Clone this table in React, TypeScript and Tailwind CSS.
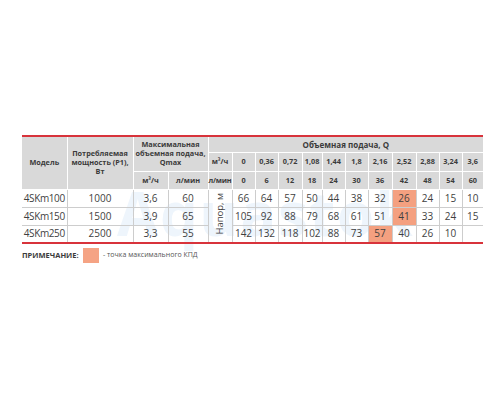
const widths = [45, 66, 35, 40, 24, 23, 23, 24, 20, 23, 23, 24, 24, 23, 23, 21];

const flowM3 = ['0', '0,36', '0,72', '1,08', '1,44', '1,8', '2,16', '2,52', '2,88', '3,24', '3,6'];
const flowL = ['0', '6', '12', '18', '24', '30', '36', '42', '48', '54', '60'];

type Row = {
  model: string;
  power: string;
  qm3: string;
  ql: string;
  head: string[];
  hot: number;
};

const rows: Row[] = [
  { model: '4SKm100', power: '1000', qm3: '3,6', ql: '60', head: ['66', '64', '57', '50', '44', '38', '32', '26', '24', '15', '10'], hot: 7 },
  { model: '4SKm150', power: '1500', qm3: '3,9', ql: '65', head: ['105', '92', '88', '79', '68', '61', '51', '41', '33', '24', '15'], hot: 7 },
  { model: '4SKm250', power: '2500', qm3: '3,3', ql: '55', head: ['142', '132', '118', '102', '88', '73', '57', '40', '26', '10', ''], hot: 6 },
];

const th = 'bg-[#d9d9d9] border border-white text-[7.3px] font-bold text-[#3b3b3b] leading-[9px] text-center p-0 whitespace-nowrap';
const td = 'border border-[#cdcdcd] text-[10px] text-[#3f3f3f] text-center p-0 h-[18px]';

export default function App() {
  return (
    <div className="w-[500px] h-[400px] bg-white pt-[135px] pl-[22px] font-['Open_Sans',sans-serif]">
      <div className="relative w-[461px]">
        <span className="absolute left-[95px] top-[48px] text-[60px] font-bold text-[#eef5fc] leading-none tracking-wide select-none">
          Aquastok
        </span>
        <table className="relative w-[461px] table-fixed border-collapse border-t-2 border-b-2 border-t-[#d8333b] border-b-[#d8333b] border-x-0">
          <colgroup>
            {widths.map((w, i) => (
              <col key={i} style={{ width: w }} />
            ))}
          </colgroup>
          <thead>
            <tr className="h-[16px]">
              <th rowSpan={3} className={th + ' border-l-0'}>Модель</th>
              <th rowSpan={3} className={th}>
                Потребляемая
                <br />
                мощность (P1),
                <br />
                Вт
              </th>
              <th rowSpan={2} colSpan={2} className={th}>
                Максимальная
                <br />
                объемная подача,
                <br />
                Qmax
              </th>
              <th colSpan={12} className={th + ' border-r-0 text-[8px]'}>Объемная подача, Q</th>
            </tr>
            <tr className="h-[19px]">
              <th className={th + ' text-[6.8px]'}>м³/ч</th>
              {flowM3.map((v, i) => (
                <th key={v} className={th + (i === 10 ? ' border-r-0' : '')}>
                  {v}
                </th>
              ))}
            </tr>
            <tr className="h-[18px]">
              <th className={th}>м³/ч</th>
              <th className={th}>л/мин</th>
              <th className={th + ' text-[6.6px] tracking-[-0.2px]'}>л/мин</th>
              {flowL.map((v, i) => (
                <th key={v} className={th + (i === 10 ? ' border-r-0' : '')}>
                  {v}
                </th>
              ))}
            </tr>
          </thead>
          <tbody>
            {rows.map((r, ri) => (
              <tr key={r.model}>
                <td className={td + ' border-l-0 tracking-[-0.4px]'}>{r.model}</td>
                <td className={td}>{r.power}</td>
                <td className={td}>{r.qm3}</td>
                <td className={td}>{r.ql}</td>
                {ri === 0 && (
                  <td rowSpan={3} className={td}>
                    <span className="inline-block [writing-mode:vertical-rl] rotate-180 text-[9.5px] leading-none">
                      Напор, м
                    </span>
                  </td>
                )}
                {r.head.map((v, i) => (
                  <td
                    key={i}
                    className={
                      td + (i === r.hot ? ' bg-[#f4a080]' : '') + (i === 10 ? ' border-r-0' : '')
                    }
                  >
                    {v}
                  </td>
                ))}
              </tr>
            ))}
          </tbody>
        </table>
      </div>
      <div className="flex items-center mt-[4px]">
        <span className="text-[7.5px] font-bold text-[#3b3b3b] w-[61px]">ПРИМЕЧАНИЕ:</span>
        <span className="w-[16px] h-[15px] bg-[#f5a384]" />
        <span className="ml-[4px] text-[7px] text-[#555]">- точка максимального КПД</span>
      </div>
    </div>
  );
}
